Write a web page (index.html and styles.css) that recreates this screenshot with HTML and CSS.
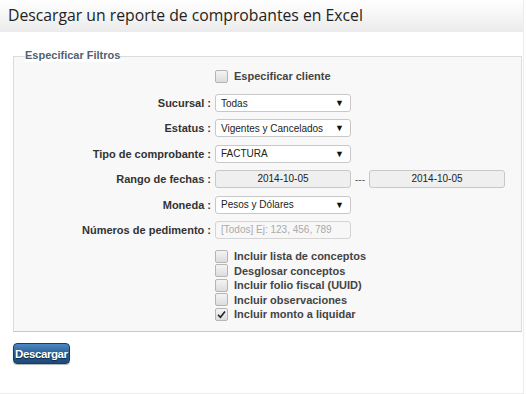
FILE: index.html
```html
<!DOCTYPE html>
<html lang="es">
<head>
    <meta charset="UTF-8">
    <title>Descargar reporte</title>
    <link rel="stylesheet" href="styles.css">
</head>
<body>
<div class="page">
    <div class="header">
        <h1 class="title">Descargar un reporte de comprobantes en Excel</h1>
    </div>

    <div class="legend-row"><span class="legend">Especificar Filtros</span></div>
    <div class="filters">

        <div class="check-row top-check">
            <span class="box"></span>
            <span class="check-label">Especificar cliente</span>
        </div>

        <div class="form-grid">
            <label class="field-label">Sucursal :</label>
            <div class="select"><span>Todas</span><span class="arrow">&#9660;</span></div>

            <label class="field-label">Estatus :</label>
            <div class="select"><span>Vigentes y Cancelados</span><span class="arrow">&#9660;</span></div>

            <label class="field-label">Tipo de comprobante :</label>
            <div class="select"><span>FACTURA</span><span class="arrow">&#9660;</span></div>

            <label class="field-label">Rango de fechas :</label>
            <div class="dates">
                <div class="date">2014-10-05</div>
                <span class="dash">---</span>
                <div class="date">2014-10-05</div>
            </div>

            <label class="field-label">Moneda :</label>
            <div class="select"><span>Pesos y Dólares</span><span class="arrow">&#9660;</span></div>

            <label class="field-label">Números de pedimento :</label>
            <div class="text-input">[Todos] Ej: 123, 456, 789</div>
        </div>

        <!-- opciones extra -->
        <div class="options">
            <div class="check-row"><span class="box"></span><span class="check-label">Incluir lista de conceptos</span></div>
            <div class="check-row"><span class="box"></span><span class="check-label">Desglosar conceptos</span></div>
            <div class="check-row"><span class="box"></span><span class="check-label">Incluir folio fiscal (UUID)</span></div>
            <div class="check-row"><span class="box"></span><span class="check-label">Incluir observaciones</span></div>
            <div class="check-row">
                <span class="box checked">
                    <svg width="9" height="9" viewBox="0 0 9 9"><path d="M1 4.8 L3.4 7.2 L8 1.6" fill="none" stroke="#222" stroke-width="1.6"/></svg>
                </span>
                <span class="check-label">Incluir monto a liquidar</span>
            </div>
        </div>
    </div>

    <div class="actions">
        <button class="btn">Descargar</button>
    </div>
</div>
</body>
</html>
```

FILE: styles.css
```css
body {
    margin: 0;
    font-family: Arial, "Liberation Sans", sans-serif;
    background: #fff;
    color: #333;
}
.page {
    width: 524px;
    height: 394px;
    box-sizing: border-box;
    border-right: 1px solid #ececec;
    border-bottom: 1px solid #ececec;
}
.header {
    height: 32px;
    background: linear-gradient(to bottom, #ffffff, #ebebeb);
    padding-left: 8px;
}
.title {
    margin: 0;
    font-family: "Open Sans", sans-serif;
    font-weight: normal;
    font-size: 15.75px;
    line-height: 30px;
    color: #222;
}

/* caja de filtros */
.legend-row {
    margin-top: 13px;
    margin-bottom: -2px;
    padding-left: 25px;
    height: 13px;
}
.legend {
    display: inline-block;
    background: #fff;
    font-size: 11px;
    line-height: 13px;
    font-weight: bold;
    color: #4f6272;
}
.filters {
    margin-left: 13px;
    width: 509px;
    box-sizing: border-box;
    padding: 11px 0 10px 0;
    border: 1px solid #dcdcdc;
    border-bottom-color: #c8c8c8;
    background: #f8f8f8;
}
.check-row {
    display: flex;
    align-items: center;
    gap: 6px;
    padding-left: 201px;
    height: 14.5px;
}
.top-check {
    height: 16px;
}
.box {
    width: 11px;
    height: 11px;
    border: 1px solid #b5b5b5;
    border-radius: 2px;
    background: linear-gradient(to bottom, #f4f4f4, #dcdcdc);
    display: flex;
    align-items: center;
    justify-content: center;
}
.check-label {
    font-size: 11px;
    font-weight: bold;
    color: #444;
}

.form-grid {
    display: grid;
    grid-template-columns: 197px 136px;
    column-gap: 4px;
    row-gap: 7.4px;
    align-items: center;
    margin-top: 10px;
}
.field-label {
    text-align: right;
    font-size: 11px;
    font-weight: bold;
    color: #333;
}
.select, .date, .text-input {
    height: 18px;
    box-sizing: border-box;
    border: 1px solid #c8c8c8;
    border-radius: 3px;
    font-size: 10px;
    color: #222;
}
.select {
    background: #fff;
    display: flex;
    align-items: center;
    justify-content: space-between;
    padding: 0 6px 0 5px;
}
.arrow {
    font-size: 9px;
    color: #111;
}
.dates {
    display: flex;
    align-items: center;
    width: 290px;
}
.date {
    width: 136px;
    background: #efefef;
    text-align: center;
    line-height: 16px;
}
.dash {
    font-size: 10px;
    color: #555;
    width: 18px;
    text-align: center;
}
.text-input {
    background: #f7f7f7;
    border-color: #d4d4d4;
    color: #aaa;
    line-height: 16px;
    padding-left: 5px;
}

.options {
    margin-top: 10px;
}

.actions {
    padding: 11px 0 0 13px;
}
.btn {
    height: 21px;
    padding: 0 1px;
    border: 1px solid #173b62;
    border-radius: 4px;
    background: linear-gradient(to bottom, #4c88c3, #2a5e94 50%, #1e4a7a);
    color: #fff;
    font-family: Arial, "Liberation Sans", sans-serif;
    font-size: 11.5px;
    font-weight: bold;
    letter-spacing: -0.4px;
    text-shadow: 0 1px 1px #0b2540;
    box-shadow: 0 1px 1px rgba(0,0,0,0.3);
}
```
